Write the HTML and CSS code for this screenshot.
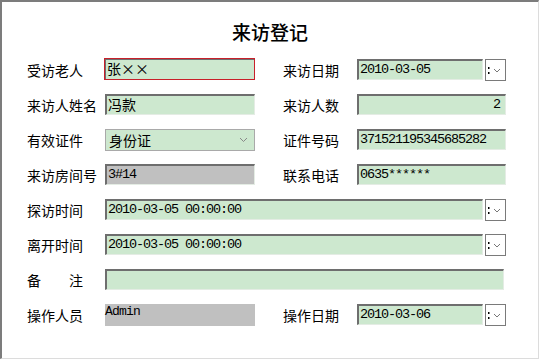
FILE: index.html
```html
<!DOCTYPE html>
<html lang="zh-CN">
<head>
<meta charset="utf-8">
<title>来访登记</title>
<link rel="stylesheet" href="styles.css">
</head>
<body>
<div class="window">
  <h1 class="title">来访登记</h1>
  <div class="form">
    <label class="lbl">受访老人</label>
    <div class="field cjk invalid">张××</div>
    <label class="lbl">来访日期</label>
    <div class="picker"><div class="field">2010-03-05</div><span class="pbtn"><svg width="19" height="20" viewBox="0 0 19 20"><rect x="2" y="7" width="1.5" height="2" fill="#000"/><rect x="2" y="12" width="1.5" height="2" fill="#000"/><polyline points="8,9 11,12 14,9" fill="none" stroke="#777" stroke-width="1"/></svg></span></div>

    <label class="lbl">来访人姓名</label>
    <div class="field cjk">冯款</div>
    <label class="lbl">来访人数</label>
    <div class="field num">2</div>

    <label class="lbl">有效证件</label>
    <div class="combo cjk"><span>身份证</span><svg width="9" height="6" viewBox="0 0 9 6"><polyline points="1,1 4.5,4.5 8,1" fill="none" stroke="#888" stroke-width="1"/></svg></div>
    <label class="lbl">证件号码</label>
    <div class="field">371521195345685282</div>

    <label class="lbl">来访房间号</label>
    <div class="field gray">3#14</div>
    <label class="lbl">联系电话</label>
    <div class="field">0635******</div>

    <label class="lbl">探访时间</label>
    <div class="picker wide"><div class="field">2010-03-05 00:00:00</div><span class="pbtn"><svg width="19" height="20" viewBox="0 0 19 20"><rect x="2" y="7" width="1.5" height="2" fill="#000"/><rect x="2" y="12" width="1.5" height="2" fill="#000"/><polyline points="8,9 11,12 14,9" fill="none" stroke="#777" stroke-width="1"/></svg></span></div>

    <label class="lbl">离开时间</label>
    <div class="picker wide"><div class="field">2010-03-05 00:00:00</div><span class="pbtn"><svg width="19" height="20" viewBox="0 0 19 20"><rect x="2" y="7" width="1.5" height="2" fill="#000"/><rect x="2" y="12" width="1.5" height="2" fill="#000"/><polyline points="8,9 11,12 14,9" fill="none" stroke="#777" stroke-width="1"/></svg></span></div>

    <label class="lbl spread"><span>备</span><span>注</span></label>
    <div class="field wide"></div>

    <label class="lbl">操作人员</label>
    <div class="static">Admin</div>
    <label class="lbl">操作日期</label>
    <div class="picker"><div class="field">2010-03-06</div><span class="pbtn"><svg width="19" height="20" viewBox="0 0 19 20"><rect x="2" y="7" width="1.5" height="2" fill="#000"/><rect x="2" y="12" width="1.5" height="2" fill="#000"/><polyline points="8,9 11,12 14,9" fill="none" stroke="#777" stroke-width="1"/></svg></span></div>
  </div>
</div>
</body>
</html>
```
FILE: styles.css
```css
* { box-sizing: border-box; }
html, body { margin: 0; padding: 0; background: #fff; }
body {
  font-family: "Noto Sans CJK SC", "Noto Sans", sans-serif;
  color: #000;
}
.window {
  width: 539px;
  height: 359px;
  border-top: 2px solid #7c7c7c;
  border-left: 2px solid #7c7c7c;
  border-right: 1px solid #dcdcdc;
  border-bottom: 1px solid #dcdcdc;
  background: #fff;
}
.title {
  margin: 20px 0 17px;
  font-size: 19px;
  line-height: 20px;
  font-weight: 500;
  text-align: center;
}
.form {
  display: grid;
  grid-template-columns: 78px 178px 74px 149px;
  grid-auto-rows: 35px;
  align-items: start;
  padding-left: 25px;
}
.lbl {
  font-size: 14px;
  line-height: 22px;
  height: 22px;
  white-space: nowrap;
}
.spread {
  display: flex;
  justify-content: space-between;
  width: 56px;
}
.field {
  height: 21px;
  width: 150px;
  background: #cde8cf;
  border-top: 2px solid #6e6e6e;
  border-left: 2px solid #6e6e6e;
  border-right: 1px solid #e4ece4;
  border-bottom: 1px solid #e4ece4;
  padding: 0 3px 0 1px;
  font-family: "Liberation Mono", "Noto Sans CJK SC", monospace;
  font-size: 13.5px;
  letter-spacing: -1.1px;
  line-height: 18px;
  white-space: nowrap;
  overflow: hidden;
}
.form > .field:nth-child(4n) { width: 149px; }
.field.cjk {
  font-family: "Noto Sans CJK SC", sans-serif;
  font-size: 14px;
  letter-spacing: 0;
  line-height: 17px;
}
.field.invalid {
  height: 22px;
  width: 151px;
  margin-left: -1px;
  margin-top: -1px;
  border: 1px solid #c8202a;
  box-shadow: inset 1px 1px 0 #6e6e6e;
  padding-left: 2px;
  line-height: 19px;
}
.field.num { text-align: right; padding-right: 5px; }
.field.gray { background: #c0c0c0; }
.field.wide { grid-column: 2 / 5; width: 399px; }
.picker {
  display: flex;
  gap: 2px;
  width: 149px;
}
.picker .field { flex: 1; width: auto; }
.picker.wide { grid-column: 2 / 5; width: 401px; }
.pbtn {
  flex: none;
  width: 21px;
  height: 22px;
  border: 1px solid #7a7a7a;
  background: #fff;
  display: flex;
}
.combo {
  width: 150px;
  height: 22px;
  background: #cde8cf;
  border: 1px solid #a9a9a9;
  display: flex;
  align-items: center;
  justify-content: space-between;
  padding: 0 6px 0 3px;
  font-size: 14px;
}
.static {
  width: 150px;
  height: 22px;
  background: #c0c0c0;
  font-family: "Liberation Mono", monospace;
  font-size: 13px;
  letter-spacing: -0.8px;
  line-height: 16px;
  padding-left: 0;
}
```
